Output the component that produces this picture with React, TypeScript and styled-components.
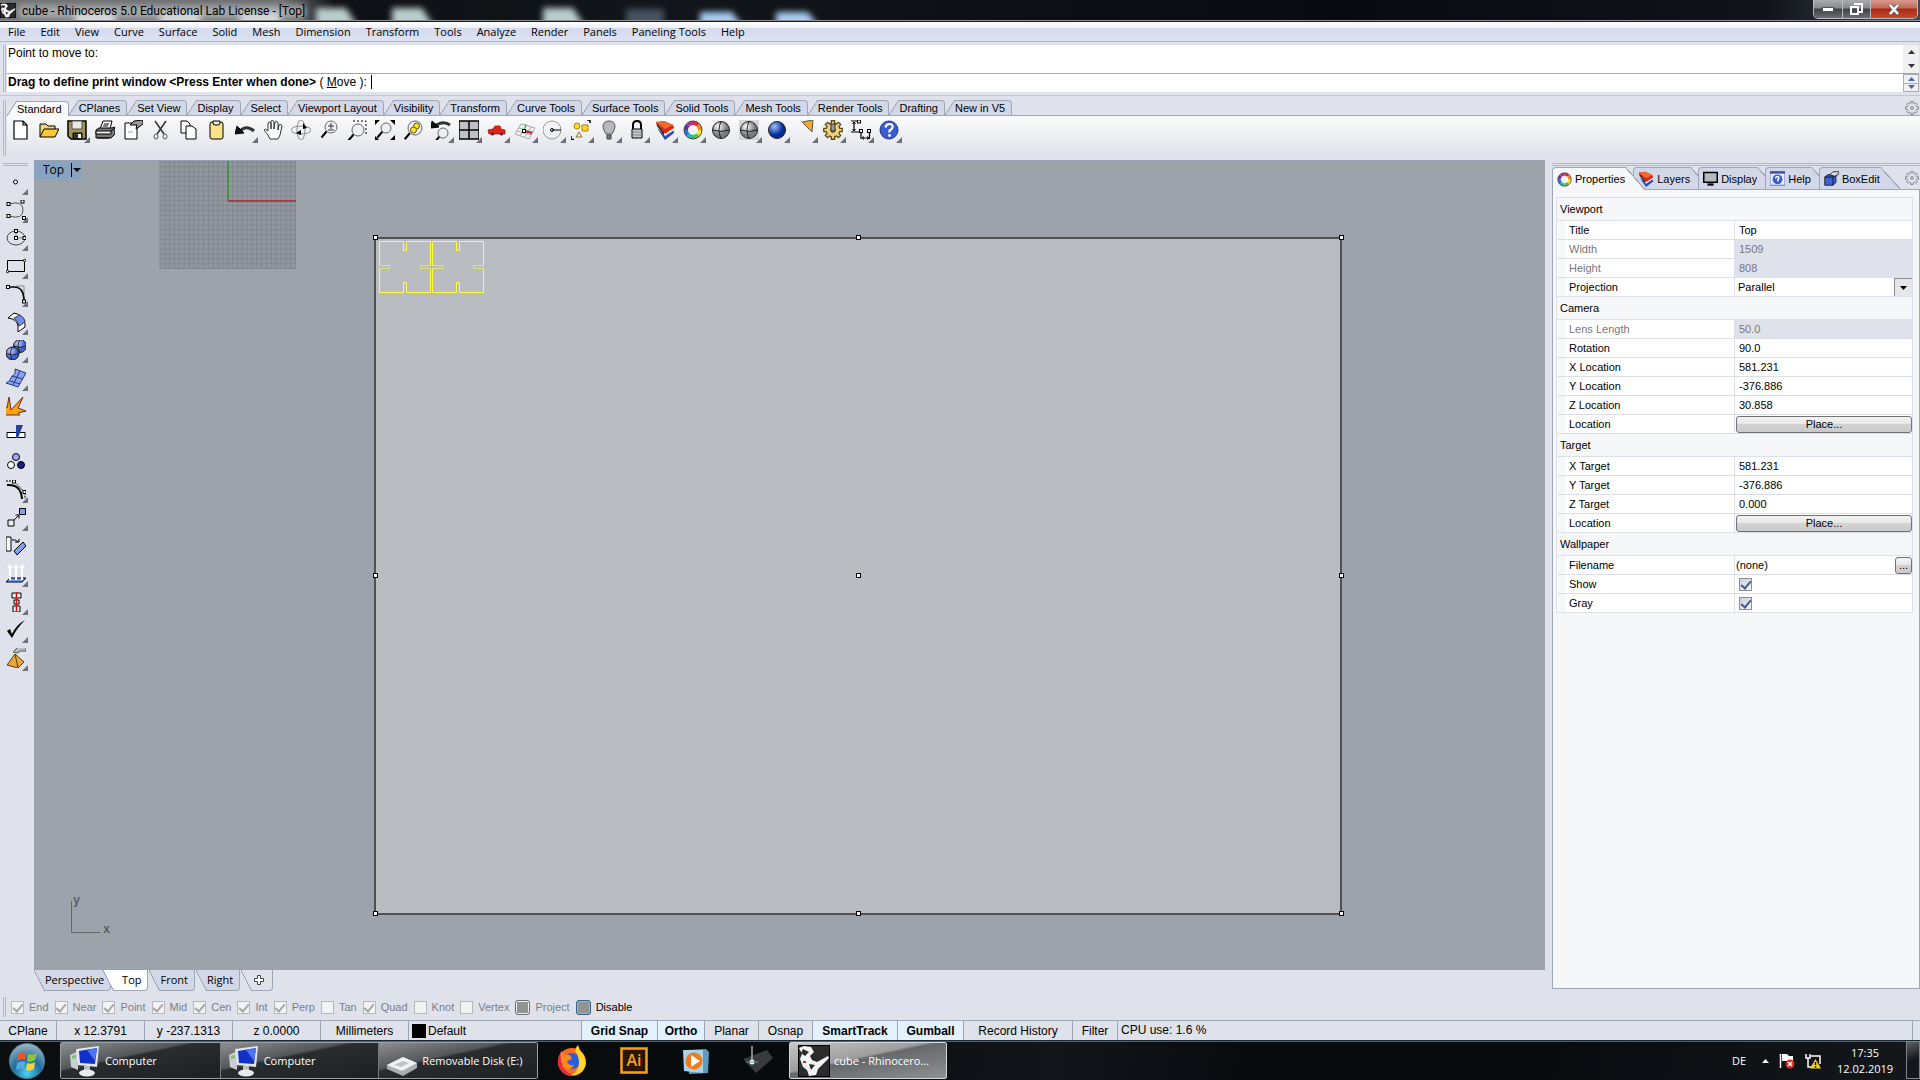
import React from 'react';
import styled, { createGlobalStyle, css } from 'styled-components';

const ui = '"Liberation Sans", Arial, sans-serif';
const shell = '"Open Sans", "Noto Sans", sans-serif';
const line = '#9fa6b4';
const face = '#dfe2ea';
const tabFace = '#d3d8e9';

const Global = createGlobalStyle`
  * { box-sizing: border-box; }
  body { margin: 0; background: ${face}; font-family: ${ui}; font-size: 11px; color: #000; }
  button, input, select { font: inherit; color: inherit; margin: 0; padding: 0; border: 0; background: none; }
  svg { display: block; }
`;

const Screen = styled.div`
  display: flex;
  flex-direction: column;
  height: 100vh;
  overflow: hidden;
`;

/* ---------- title bar ---------- */

const TitleBar = styled.header`
  position: relative;
  display: flex;
  align-items: flex-start;
  flex: 0 0 22px;
  background: linear-gradient(90deg, #0b0d10, #121519 35%, #070a0f 70%, #10141a 92%, #43484e);
  border-bottom: 1px solid #15181c;
  box-shadow: inset 0 -1px 0 #8d9095;
  overflow: hidden;
`;
const Smears = styled.svg`
  position: absolute;
  inset: 0;
`;
const TitleIcon = styled.span`
  position: relative;
  padding: 3px 0 0 0;
`;
const TitleText = styled.h1`
  position: relative;
  margin: 0;
  padding: 2px 0 0 6px;
  flex: 1;
  font: 400 12px/18px Roboto, ${shell};
`;
const WindowButtons = styled.div`
  position: relative;
  display: flex;
  height: 19px;
  margin-right: 2px;
  border: 1px solid #b9bcc0;
  border-top: 0;
  border-radius: 0 0 5px 5px;
  overflow: hidden;
`;
const WindowButton = styled.button<{ $wide?: boolean }>`
  width: ${p => (p.$wide ? 47 : 28)}px;
  display: grid;
  place-items: center;
  background: ${p =>
    p.$wide
      ? 'linear-gradient(#d99a8f, #c0675a 45%, #a82a14 50%, #c24a2e)'
      : 'linear-gradient(#a9abae, #85888c 45%, #3d4146 50%, #6b6f74)'};
  & + & { border-left: 1px solid #b9bcc0; }
`;

/* ---------- menus and command line ---------- */

const MenuBar = styled.nav`
  display: flex;
  flex: 0 0 20px;
  gap: 15px;
  padding: 0 8px;
  background: linear-gradient(#fff, #edf0f7 30%, #d4daec 34%, #dee3f3);
  border-bottom: 1px solid #b0b5c6;
`;
const MenuButton = styled.button`
  font: 400 11px/19px ${shell};
`;
const CommandArea = styled.section`
  display: flex;
  flex: 0 0 54px;
  padding: 3px 1px 3px 3px;
  border-bottom: 1px solid #c3c9d2;
`;
const Grip = styled.span<{ $flat?: boolean }>`
  flex: none;
  ${p =>
    p.$flat
      ? css`height: 3px; border-top: 1px solid #b3b8c8; border-bottom: 1px solid #b3b8c8;`
      : css`width: 3px; border-left: 1px solid #b3b8c8; border-right: 1px solid #b3b8c8;`}
`;
const CommandBox = styled.div`
  flex: 1;
  margin-left: 1px;
  background: #fff;
  font-size: 12px;
`;
const History = styled.div`
  display: flex;
  justify-content: space-between;
  height: 29px;
  padding-left: 1px;
  line-height: 16px;
  border-bottom: 1px solid ${line};
`;
const Prompt = styled.div`
  display: flex;
  justify-content: space-between;
  height: 18px;
  padding-left: 1px;
  line-height: 17px;
`;
const PromptText = styled.label`
  white-space: pre;
`;
const PromptInput = styled.input`
  flex: 1;
  margin-left: 4px;
  border-left: 1px solid #000;
  height: 14px;
  margin-top: 1px;
  outline: none;
`;
const ScrollPair = styled.div<{ $boxed?: boolean }>`
  display: flex;
  flex-direction: column;
  width: 16px;
  background: #f0f0f2;
  border: ${p => (p.$boxed ? '1px solid #a9adb8' : '0')};
  button { flex: 1; display: grid; place-items: center; }
  button + button { border-top: ${p => (p.$boxed ? '1px solid #a9adb8' : '0')}; }
`;

/* ---------- toolbar ---------- */

const ToolArea = styled.section`
  display: flex;
  flex: 0 0 64px;
  padding: 4px 0 4px 3px;
`;
const ToolMain = styled.div`
  flex: 1;
  display: flex;
  flex-direction: column;
  margin-left: 1px;
`;
const TabStrip = styled.div`
  display: flex;
  align-items: flex-end;
  height: 16px;
  border-bottom: 1px solid ${line};
`;
const ToolTab = styled.button<{ $on?: boolean }>`
  display: flex;
  height: 15px;
  margin-bottom: ${p => (p.$on ? -1 : 0)}px;
  line-height: 15px;
  white-space: nowrap;
  &::before {
    content: '';
    width: 10px;
    height: 100%;
    background: linear-gradient(to bottom right, transparent 46%, ${line} 47%, ${line} 52%, ${p => (p.$on ? '#fafbfc' : tabFace)} 53%);
  }
  span {
    height: 100%;
    padding-right: 6px;
    border: 1px solid ${line};
    border-width: 1px 1px 0 0;
    border-radius: 0 4px 0 0;
    background: ${p => (p.$on ? '#fafbfc' : tabFace)};
  }
`;
const StripSpace = styled.span`
  flex: 1;
`;
const IconButton = styled.button`
  display: grid;
  place-items: center;
  padding-right: 1px;
`;
const ToolRow = styled.div`
  display: flex;
  flex: 1;
  background: linear-gradient(#fafbfc, #f0f1f4 40%, ${face});
`;
const Tool = styled.button<{ $more?: boolean; $side?: boolean }>`
  position: relative;
  flex: none;
  display: grid;
  place-items: center;
  width: ${p => (p.$side ? 25 : 28)}px;
  height: 28px;
  ${p =>
    p.$more &&
    css`
      &::after {
        content: '';
        position: absolute;
        right: ${p.$side ? 0 : 1}px;
        bottom: 1px;
        border: 3px solid #6c7078;
        border-top-color: transparent;
        border-left-color: transparent;
      }
    `}
`;

/* ---------- workspace ---------- */

const Work = styled.main`
  display: flex;
  flex: 1;
  min-height: 0;
`;
const SideBar = styled.aside`
  display: flex;
  flex-direction: column;
  flex: 0 0 34px;
  padding: 3px 6px 0 3px;
`;
const SideTools = styled.div`
  display: flex;
  flex-direction: column;
  padding-top: 2px;
`;
const Center = styled.section`
  display: flex;
  flex-direction: column;
  flex: 1;
  min-width: 0;
`;
const Viewport = styled.div`
  position: relative;
  flex: 1;
  min-height: 0;
  overflow: hidden;
  background: #9da3ab;
  border: solid #9aa1b3;
  border-width: 1px 0;
`;
const Drawing = styled.svg`
  position: absolute;
  top: 0;
  left: 0;
`;
const Axes = styled.svg`
  position: absolute;
  left: 37px;
  bottom: 33px;
`;
const ViewLabel = styled.button`
  position: absolute;
  top: 0;
  left: 0;
  display: flex;
  align-items: center;
  height: 18px;
  width: 48px;
  padding-left: 9px;
  gap: 7px;
  background: #88a3c0;
  font: 400 12px/18px ${shell};
`;
const ViewTabs = styled.div`
  display: flex;
  height: 24px;
  align-items: flex-start;
`;
const ViewTab = styled.button<{ $on?: boolean; $first?: boolean; $plain?: boolean }>`
  position: relative;
  z-index: ${p => (p.$on ? 1 : 0)};
  display: flex;
  height: 21px;
  margin-left: ${p => (p.$on ? -8 : p.$first ? 0 : 1)}px;
  font: 400 11px/20px ${shell};
  &::before {
    content: '';
    width: 11px;
    height: 100%;
    background: linear-gradient(to top right, transparent 46%, ${line} 47%, ${line} 51%, ${p => (p.$on ? '#fff' : p.$plain ? face : tabFace)} 52%);
  }
  span {
    display: grid;
    place-items: center;
    height: 100%;
    padding: 0 6px 0 ${p => (p.$on ? 8 : 0)}px;
    border: 1px solid ${line};
    border-width: 0 1px 1px 0;
    border-radius: 0 0 4px 0;
    background: ${p => (p.$on ? '#fff' : p.$plain ? face : tabFace)};
  }
`;

/* ---------- properties panel ---------- */

const Panel = styled.aside`
  display: flex;
  flex-direction: column;
  flex: 0 0 375px;
  padding: 3px 0 0 7px;
`;
const PanelTabs = styled.div`
  display: flex;
  flex: none;
  height: 23px;
  padding-top: 1px;
`;
const PanelTab = styled.button<{ $on?: boolean }>`
  position: relative;
  z-index: ${p => (p.$on ? 1 : 0)};
  display: flex;
  flex: none;
  height: ${p => (p.$on ? 23 : 22)}px;
  margin-right: -12px;
  line-height: 20px;
  & > span {
    display: flex;
    align-items: center;
    gap: 3px;
    padding-left: 4px;
    border: 1px solid ${line};
    border-width: 1px 0 0 1px;
    border-radius: 4px 0 0 0;
    background: ${p => (p.$on ? '#f6f7f9' : tabFace)};
  }
  &::after {
    content: '';
    width: 20px;
    height: 100%;
    background: linear-gradient(to top right, ${p => (p.$on ? '#f6f7f9' : tabFace)} 48%, ${line} 49%, ${line} 52%, transparent 53%);
  }
`;
const PanelBody = styled.div`
  flex: 1;
  margin-bottom: 5px;
  padding: 7px 6px 0 3px;
  background: #f6f7f9;
  border: 1px solid ${line};
`;
const PropTable = styled.table`
  width: 100%;
  border-collapse: collapse;
  table-layout: fixed;
  line-height: 16px;
  background: #fff;
  td, th { border: 1px solid #dcdfe8; padding: 0; font-weight: 400; text-align: left; height: 19px; }
`;
const GroupCell = styled.th`
  && { height: 23px; padding-left: 3px; background: #f6f7f9; }
`;
const NameCell = styled.th<{ $dim?: boolean }>`
  width: 178px;
  && { border-right: 1px solid #dcdfe8; padding-left: 12px; }
  background: linear-gradient(90deg, #f6f7f9 8px, #fff 8px);
  color: ${p => (p.$dim ? '#777' : '#000')};
`;
const ValueCell = styled.td<{ $dim?: boolean; $flush?: boolean }>`
  background: ${p => (p.$dim ? face : '#fff')};
  color: ${p => (p.$dim ? '#777' : '#000')};
  && { padding-left: ${p => (p.$flush ? 1 : 4)}px; }
`;
const Field = styled.input`
  display: block;
  width: 100%;
  height: 16px;
`;
const Pair = styled.div`
  display: flex;
  align-items: center;
  justify-content: space-between;
  height: 18px;
`;
const Choice = styled.select`
  appearance: none;
  flex: 1;
  padding-left: 2px;
`;
const Arrow = styled.span`
  display: grid;
  place-items: center;
  width: 18px;
  height: 18px;
  border: 1px solid #8b8e94;
  border-width: 1px 0 0 1px;
  background: #e6e6e6;
`;
const Push = styled.button<{ $small?: boolean }>`
  display: block;
  width: ${p => (p.$small ? '17px' : '100%')};
  height: 17px;
  border: 1px solid #707276;
  border-radius: 3px;
  background: linear-gradient(#f3f3f3, #e6e6e6 49%, #d2d2d2 50%, #cbcbcb);
  line-height: 14px;
`;
const Tick = styled.input<{ $pale?: boolean; $block?: 'gray' | 'blue' }>`
  appearance: none;
  flex: none;
  display: grid;
  place-items: center;
  width: 13px;
  height: 13px;
  background: ${p => (p.$pale ? '#f3f3f4' : 'linear-gradient(135deg, #c9ced6, #f6f7f8)')};
  border: 1px solid ${p => (p.$pale ? '#b6b8bc' : '#8c8e92')};
  ${p =>
    !p.$block &&
    css`
      &:checked::after {
        content: '';
        width: 4px;
        height: 8px;
        margin-bottom: 2px;
        border: solid ${p.$pale ? '#a5a7ab' : '#43599c'};
        border-width: 0 2px 2px 0;
        transform: rotate(40deg);
      }
    `}
  ${p =>
    p.$block &&
    css`
      height: 15px;
      width: 15px;
      border-radius: 3px;
      border-color: ${p.$block === 'blue' ? '#2c628b' : '#6e7175'};
      background: #929292;
      box-shadow: inset 0 0 0 1px ${p.$block === 'blue' ? '#8dbbd9' : '#f0f0f0'};
    `}
`;

/* ---------- osnap and status ---------- */

const OsnapBar = styled.section`
  display: flex;
  align-items: center;
  flex: 0 0 26px;
  padding: 0 3px;
  line-height: 13px;
  ${Grip} { height: 20px; margin-right: 5px; }
`;
const Osnap = styled.label<{ $live?: boolean }>`
  display: flex;
  align-items: center;
  gap: 5px;
  margin-right: 6px;
  color: ${p => (p.$live ? '#000' : '#7c7e84')};
`;
const StatusBar = styled.footer`
  display: flex;
  flex: 0 0 20px;
  border-top: 1px solid ${line};
  font-size: 12px;
  padding-right: 7px;
`;
const Pane = styled.button<{ $w: number; $on?: boolean; $left?: boolean }>`
  display: flex;
  align-items: center;
  justify-content: ${p => (p.$left ? 'flex-start' : 'center')};
  gap: 2px;
  width: ${p => p.$w}px;
  padding-left: ${p => (p.$left ? 3 : 0)}px;
  border-right: 1px solid ${line};
  background: ${p => (p.$on ? '#e2f1fb' : 'transparent')};
  font-weight: ${p => (p.$on ? 700 : 400)};
  white-space: nowrap;
`;
const Usage = styled.output`
  flex: 1;
  padding-left: 3px;
  line-height: 19px;
  border-right: 1px solid ${line};
`;
const Swatch = styled.i`
  width: 14px;
  height: 14px;
  background: #000;
`;

/* ---------- taskbar ---------- */

const TaskBar = styled.nav`
  display: flex;
  align-items: stretch;
  flex: 0 0 40px;
  border-top: 1px solid #1c2832;
  box-shadow: inset 0 1px 0 #59626c;
  background: linear-gradient(100deg, #0b0f12, #070b0e 40%, #12161a 55%, #070b0e 65%, #070b0e 80%, #14181c);
  color: #fff;
  font: 400 11px/16px ${shell};
`;
const Orb = styled.button`
  width: 60px;
  padding-left: 8px;
`;
const TaskGroup = styled.div`
  display: flex;
  width: 478px;
  margin: 1px 3px 1px 0;
  border: 1px solid #9b9ea1;
  border-radius: 2px;
  overflow: hidden;
`;
const Task = styled.button<{ $active?: boolean }>`
  display: flex;
  align-items: center;
  gap: 4px;
  flex: 1;
  padding-left: 8px;
  text-align: left;
  white-space: nowrap;
  background: linear-gradient(168deg, #8d8f91, #54575a 38%, #2a2d30 42%, #1d2023);
  & + & { box-shadow: inset 1px 0 0 #777; }
  ${p =>
    p.$active &&
    css`
      flex: none;
      width: 158px;
      margin: 1px 0;
      border: 1px solid #d5d7d8;
      border-radius: 2px;
      background: linear-gradient(168deg, #c5c6c7, #9b9d9f 42%, #66696c 46%, #8e9092);
    `}
`;
const Launcher = styled.button`
  width: 62px;
  display: grid;
  place-items: center;
`;
const Tray = styled.div`
  display: flex;
  align-items: center;
  gap: 10px;
  margin-left: auto;
  padding-right: 7px;
  text-align: center;
`;
const Language = styled.span`
  margin-right: 6px;
`;
const Clock = styled.time`
  width: 68px;
`;
const ShowDesktop = styled.button`
  width: 14px;
  height: 38px;
  border: 1px solid #80858a;
  background: linear-gradient(160deg, #5b6065, #15181b 50%);
`;

/* ---------- icons ---------- */

const Ico = ({ children, s = 20 }: { children: React.ReactNode; s?: number }) => (
  <svg width={s} height={s} viewBox="0 0 20 20" fill="none" stroke="#000" aria-hidden="true">{children}</svg>
);
const Lens = ({ x = 12, y = 7, r = 6 }) => (
  <g>
    <circle cx={x} cy={y} r={r} fill="#eef0f3" stroke="#666" />
    <path d={`M${x - r * 0.75} ${y + r * 0.75}L${x - r * 0.75 - 5} ${y + r * 0.75 + 6}`} strokeWidth="2" />
  </g>
);
const Wheel = () => (
  <g strokeWidth="4" transform="translate(10 10)">
    {['#e22b2b', '#f08a1e', '#f2e42a', '#4fc232', '#25b6a8', '#2a6fd8', '#5c35b8', '#c12a8e'].map((c, i) => (
      <path key={c} stroke={c} d="M0 -7A7 7 0 0 1 4.95 -4.95" transform={`rotate(${i * 45})`} />
    ))}
    <circle r="9" stroke="#444" strokeWidth="1" />
  </g>
);
const LayersIcon = () => (
  <g stroke="none">
    <path d="M2 8L10 20L19 13L18 8L9 14Z" fill="#2b4bb5" />
    <path d="M2 5L10 16L19 10V7L9 13Z" fill="#fff" />
    <path d="M1 2L9 12V15L2 6Z" fill="#222" />
    <path d="M1 2L9 1L18 5L19 8L10 14Z" fill="#d9290f" />
    <path d="M1 2L9 1L18 5L10 9Z" fill="#f4692e" />
  </g>
);
const Ball = ({ a, b, x = 10, y = 10, r = 8, grid = true }: { a: string; b: string; x?: number; y?: number; r?: number; grid?: boolean }) => {
  const id = `ball${a.slice(1)}${b.slice(1)}`;
  return (
    <g>
      <radialGradient id={id} cx=".35" cy=".3"><stop offset="0" stopColor={a} /><stop offset="1" stopColor={b} /></radialGradient>
      <circle cx={x} cy={y} r={r} fill={`url(#${id})`} stroke="#222" />
      {grid && <path d={`M${x - r} ${y}Q${x} ${y + 3} ${x + r} ${y}M${x} ${y - r}Q${x - 4} ${y} ${x} ${y + r}`} stroke="#222" />}
    </g>
  );
};
const Dot = ({ x, y }: { x: number; y: number }) => <rect x={x - 1.5} y={y - 1.5} width="3" height="3" fill="#fff" />;

/* Eight teeth, four points each, on alternating radii. */
const gearPath = Array.from({ length: 8 }, (_, i) =>
  [[-14, 7], [-10, 9.4], [10, 9.4], [14, 7]].map(([deg, r]) => {
    const a = ((i * 45 + deg) * Math.PI) / 180;
    return `${(10 + r * Math.cos(a)).toFixed(2)} ${(10 + r * Math.sin(a)).toFixed(2)}`;
  }).join('L')
).join('L');
const Gear = ({ fill = 'none', stroke = '#7c7f85' }) => (
  <g fill={fill} stroke={stroke} strokeWidth="1.300">
    <path d={`M${gearPath}Z`} />
    <circle cx="10" cy="10" r="2" />
  </g>
);

const toolIcons: { name: string; more?: boolean; art: React.ReactNode }[] = [
  { name: 'New', art: <path d="M3 1h9l4 4v14H3zM12 1v4h4" fill="#fff" strokeWidth="1.200" /> },
  { name: 'Open', art: <><path d="M1 17V4h6l2 2h7v3" fill="#f6d56a" /><path d="M1 17L5 9H20L16 17Z" fill="#f9c93c" /></> },
  { name: 'Save', more: true, art: <><path d="M1 1h18v18H4l-3-3z" fill="#a09356" strokeWidth="1.500" /><path d="M5 1h10v8H5z" fill="#e8e8e4" stroke="#555" /><path d="M6 13h9v6H6z" fill="#333" /><path d="M11 14h3v4h-3z" fill="#fff" stroke="none" /></> },
  { name: 'Print', art: <><path d="M5 9L8 1H17L15 9" fill="#fff" /><path d="M1 10L4 8H17L20 7V14L16 18H1Z" fill="#777" /><path d="M1 11h15v3H1zM16 11l4-3" fill="#eee" /><path d="M3 18h11M9 4h5M8 6h5" /></> },
  { name: 'Export', art: <><path d="M2 3h12v16H2z" fill="#fff" /><path d="M7 5L11 1L20 0V4L16 7L13 9L14 5Z" fill="#999" /><path d="M5 12h5" stroke="#aaa" /></> },
  { name: 'Cut', art: <><path d="M4 1L13 14M15 1L6 14" stroke="#333" strokeWidth="1.500" /><ellipse cx="5" cy="16.500" rx="2" ry="2.500" stroke="#555" /><ellipse cx="14" cy="16.500" rx="2" ry="2.500" stroke="#555" /></> },
  { name: 'Copy', art: <><path d="M2 1h6l3 3v9H2z" fill="#fff" /><path d="M7 6h6l4 3v10H7z" fill="#fff" /></> },
  { name: 'Paste', art: <><rect x="3" y="2" width="13" height="17" rx="2" fill="#f8e386" /><path d="M6 1h7v3l-2 1H8L6 4z" fill="#e9e9e9" /></> },
  { name: 'Undo', more: true, art: <><path d="M4 12Q11 4 19 11" strokeWidth="3" stroke="#333" /><path d="M0 14L2 6L9 13Z" fill="#111" /></> },
  { name: 'Pan', art: <path d="M7 19L5 15L1 10Q2 8 5 11V3Q6 1 8 3V9V1Q10-1 11 2V9L12 2Q14 0 15 3V10L16 5Q18 3 19 6L17 15L15 19Z" fill="#fff" stroke="#333" /> },
  { name: 'Rotate view', art: <><ellipse cx="10" cy="10" rx="10" ry="4" stroke="#8a8c90" /><ellipse cx="10" cy="10" rx="4" ry="10" stroke="#8a8c90" /><path d="M5 13L10 15V10ZM12 9V3L16 8Z" fill="#000" stroke="none" /></> },
  { name: 'Zoom', art: <><Lens /><path d="M9 6h6M12 3v6M9 10h6" stroke="#333" /></> },
  { name: 'Zoom window', art: <><path d="M6 1H19V14" strokeDasharray="2 2" /><Lens x={11} y={10} /></> },
  { name: 'Zoom extents', art: <><Lens x={11} y={8} r={5} /><path d="M0 0h5L0 5zM20 0v5l-5-5zM20 20h-5l5-5zM0 20v-4l4 4z" fill="#000" stroke="none" /></> },
  { name: 'Zoom selected', art: <><Lens x={12} y={8} r={7} /><circle cx="13.500" cy="6" r="3" fill="#f7e22a" stroke="#6a5a10" /><circle cx="10.500" cy="10" r="3" fill="#f7e22a" stroke="#6a5a10" /></> },
  { name: 'Undo view', more: true, art: <><Lens x={12} y={13} r={5} /><path d="M4 6Q12 0 19 5" strokeWidth="3" stroke="#333" /><path d="M0 8L1 1L8 7Z" fill="#111" /></> },
  { name: 'Four views', more: true, art: <path d="M0 1h20v18H0zM10 1v18M0 10h20" fill="#bfc1c4" strokeWidth="1.500" /> },
  { name: 'Named views', more: true, art: <><path d="M2 14L1 10L6 9L8 6H13L14 9L18 10V14Z" fill="#e0231b" stroke="#a11" strokeWidth=".800" /><circle cx="5.500" cy="14" r="1.600" fill="#333" stroke="none" /><circle cx="14.500" cy="14" r="1.600" fill="#333" stroke="none" /></> },
  { name: 'CPlane', more: true, art: <><path d="M0 14L6 4L20 8L14 19ZM2 11L16 15M4 8L18 12M5 16L11 6M10 17L16 7" stroke="#a7a9ae" /><path d="M9 11L17 13" stroke="#b22" strokeWidth="2" /><path d="M9 11L11 4" stroke="#2a2" /><Dot x={9} y={11} /></> },
  { name: 'Object snap', more: true, art: <><circle cx="9" cy="10" r="9" stroke="#999" /><path d="M9 10H18" /><circle cx="9" cy="10" r="1.500" /></> },
  { name: 'Select', more: true, art: <><circle cx="6" cy="6" r="3" fill="#f7d92a" stroke="#a80" /><path d="M11 5h6v6h-6z" fill="#f7d92a" stroke="#a80" /><path d="M8 12L11 17H5Z" stroke="#963" /><path d="M16 0h3v3M0 16v3.500h3" strokeWidth="1.500" /></> },
  { name: 'Hide', more: true, art: <><path d="M10 1Q16 1 16 7Q15 11 13 14H7Q5 11 4 7Q4 1 10 1Z" fill="#b5b8bc" stroke="#555" /><path d="M8 15h4v4H8z" fill="#777" stroke="#444" /></> },
  { name: 'Lock', more: true, art: <><path d="M6 9V5Q6 1 10 1T14 5V9" strokeWidth="2" /><path d="M5 9h10v9H5z" fill="#c5c7ca" /><path d="M6 12h8M6 15h8" stroke="#888" /></> },
  { name: 'Layers', more: true, art: <LayersIcon /> },
  { name: 'Properties', more: true, art: <Wheel /> },
  { name: 'Shade', art: <Ball a="#ffffff" b="#77797d" r={8.5} /> },
  { name: 'Ghosted', more: true, art: <><path d="M0 0h20v20H0z" stroke="none" fill="#d4d5d8" /><Ball a="#ffffff" b="#77797d" r={8.5} /></> },
  { name: 'Render', more: true, art: <Ball a="#9cc4ff" b="#062a9a" r={8.5} grid={false} /> },
  { name: 'Spotlight', more: true, art: <path d="M7 2L18 0L17 12Z" fill="#f7a823" stroke="#555" /> },
  { name: 'Options', more: true, art: <><Gear fill="#f0cf78" stroke="#5a4a18" /><path d="M8 4h4v7H8z" fill="#999" stroke="#333" /></> },
  { name: 'Dimension', more: true, art: <><path d="M0 1h9M0 12h8M3 2V11M10 12V19M18.500 12V19M11 18H18" strokeWidth="1.200" /><path d="M1.500 4L3 2L4.500 4M1.500 9L3 11L4.500 9M13 16.500L11 18L13 19.500M16 16.500L18 18L16 19.500" /><Dot x={8} y={1.500} /><Dot x={10} y={11} /><Dot x={18} y={11} /></> },
  { name: 'Help', more: true, art: <><circle cx="10" cy="10" r="9" fill="#3a5bd0" stroke="#22388f" /><path d="M6.500 7.500Q7 4 10.500 4T13.500 7.500Q13 9.500 10.500 10.500V12.500" stroke="#fff" strokeWidth="2.200" /><circle cx="10.500" cy="15.500" r="1.400" fill="#fff" stroke="none" /></> },
];

const sideIcons: { name: string; more?: boolean; art: React.ReactNode }[] = [
  { name: 'Point', more: true, art: <circle cx="9.500" cy="10" r="2" fill="#fff" /> },
  { name: 'Curve', more: true, art: <><path d="M3 4Q17 0 17 10T3 16" stroke="#555" /><Dot x={2.500} y={4} /><Dot x={16.500} y={1.500} /><Dot x={2.500} y={16} /><Dot x={18} y={18} /></> },
  { name: 'Ellipse', more: true, art: <><ellipse cx="10" cy="10" rx="9" ry="7" stroke="#444" /><path d="M10 3V10H19" stroke="#777" /><Dot x={10} y={3} /><Dot x={10} y={10} /><Dot x={18.500} y={10} /></> },
  { name: 'Rectangle', more: true, art: <><path d="M1.500 4.500h17v11h-17z" /><circle cx="18.500" cy="4.500" r="1.200" fill="#fff" /><circle cx="1.500" cy="15.500" r="1.200" fill="#fff" /></> },
  { name: 'Fillet', more: true, art: <><path d="M10 2H18V10" stroke="#888" /><path d="M2 3H8Q18 3 18 17" strokeWidth="1.700" /><Dot x={2} y={3} /><Dot x={18} y={17.500} /></> },
  { name: 'Surface', more: true, art: <><path d="M2 6L8 1Q18 3 19 12V15L12 20V14Q11 7 2 6Z" fill="#fff" /><path d="M8 6L14 3Q19 6 19 10L13 14Q12 9 8 6Z" fill="#6f8eed" stroke="#334" /></> },
  { name: 'Solid', more: true, art: <><Ball a="#c6d4ff" b="#3d5fd4" x={14} y={6} r={6.5} /><Ball a="#c6d4ff" b="#3d5fd4" x={6.5} y={13.5} r={6.5} /></> },
  { name: 'Mesh', more: true, art: <path d="M9 1L20 5L12 19L0 15Q4 14 6 8Q10 7 9 1ZM6 8L17 11M4 13L14 16M14 3L7 17" fill="#8aa4f2" stroke="#223a80" /> },
  { name: 'Explode', art: <path d="M-2 19V10L1 12L3 1L5 14L17 1L12 12L20 15L12 17L14 19Z" fill="#ff9f0a" stroke="#632" /> },
  { name: 'Trim', art: <><path d="M1 8.500h18v5H1z" fill="#fff" /><path d="M10 1H17L12 14H10Z" fill="#24409a" stroke="none" /></> },
  { name: 'Group', art: <><circle cx="10" cy="5" r="3.500" fill="#a3a8f6" /><circle cx="5" cy="13" r="3.500" fill="#fff" /><circle cx="15" cy="13" r="3.500" fill="#1d1d8c" /></> },
  { name: 'Control points', more: true, art: <><path d="M1 5Q15 4 16 19" strokeWidth="2" /><path d="M0 1H8L19 13V19" strokeDasharray="2 1" /><Dot x={8} y={1.500} /><Dot x={18.500} y={12} /></> },
  { name: 'Move', more: true, art: <><path d="M2 12h6v6H2z" fill="#eee" /><path d="M13.500 .500h6v6h-6z" fill="#7f9ff5" /><path d="M8 12L13 7M9.500 7H13V10.500" /></> },
  { name: 'Rotate', art: <><path d="M0 1h5v14H0z" fill="#fff" /><path d="M8 15L17 6L20 10L11 19Z" fill="#7f9ff5" /><path d="M6 4Q10 3 12 6M9 6h4V3" /></> },
  { name: 'Extrude', more: true, art: <><path d="M0 18L4 14H20L16 18Z" fill="#7f9ff5" /><path d="M4 16V3M10 16V3M16 16V3" stroke="#fff" strokeWidth="2" /><path d="M4 0L7 4H1ZM10 0L13 4H7ZM16 0L19 4H13Z" fill="#fff" stroke="none" /></> },
  { name: 'Align', more: true, art: <><path d="M6 1h9v5H6zM8 8h5v4H8zM7 14h7v6H7z" fill="#eee" /><path d="M10.500 0V20" stroke="#c31818" strokeWidth="1.500" /></> },
  { name: 'Check', more: true, art: <path d="M1 11L4 9L6 14Q10 5 19 0Q11 8 6 18Z" fill="#000" stroke="none" /> },
  { name: 'Pyramid', more: true, art: <><path d="M9 6L18 14L12 20L1 17Z" fill="#e9a63a" stroke="#5a3d10" /><path d="M9 6L12 20" stroke="#5a3d10" /><path d="M7 4L12-1H20V3H14L12 5Z" fill="#bbb" stroke="#555" /></> },
];

const RhinoMark = ({ w, h }: { w: number; h: number }) => (
  <svg width={w} height={h} viewBox="0 0 32 32" preserveAspectRatio="none" aria-hidden="true">
    <path d="M0 0h32v32H0z" fill="#2b2b2d" stroke="#000" strokeWidth="2" />
    <path d="M1 3L6 1L13 2L16 7L12 11L14 15L19 17L30 11L31 13L24 20L20 24L18 30L11 31L9 25L5 22L2 14L4 9Z" fill="#f4f4f4" />
    <path d="M5 4L11 7L7 11L3 8ZM11 19L17 20L13 25Z" fill="#2b2b2d" />
    <path d="M5 17h3" stroke="#d22" strokeWidth="2" />
  </svg>
);
const ComputerMark = () => (
  <svg width="32" height="32" viewBox="0 0 32 32" aria-hidden="true">
    <path d="M1 10L9 6V25L2 22Z" fill="#c9cdd2" />
    <path d="M3 11L7 10V13L3 14Z" fill="#7ec06b" />
    <path d="M7 4L30 1L28 22L9 20Z" fill="#e3e7ec" />
    <path d="M10 6L28 3L26 19L11 18Z" fill="#1230c8" />
    <path d="M18 5L28 3L26 16Z" fill="#4c74ef" />
    <path d="M15 21h6v5h-6z" fill="#b9bec4" />
    <ellipse cx="18" cy="28" rx="8" ry="3.500" fill="#e8eaec" />
  </svg>
);
const DiskMark = () => (
  <svg width="32" height="32" viewBox="0 0 32 32" aria-hidden="true">
    <path d="M1 20L17 12L31 18V23L17 31L1 24Z" fill="#a9adb1" />
    <path d="M1 20L17 12L31 18L16 26Z" fill="#eef0f1" />
    <path d="M8 20L17 16L23 18L15 22Z" fill="#bfc3c6" />
  </svg>
);

const menus = ['File', 'Edit', 'View', 'Curve', 'Surface', 'Solid', 'Mesh', 'Dimension', 'Transform', 'Tools', 'Analyze', 'Render', 'Panels', 'Paneling Tools', 'Help'];
const toolTabs = ['Standard', 'CPlanes', 'Set View', 'Display', 'Select', 'Viewport Layout', 'Visibility', 'Transform', 'Curve Tools', 'Surface Tools', 'Solid Tools', 'Mesh Tools', 'Render Tools', 'Drafting', 'New in V5'];
const osnaps: [string, boolean][] = [['End', true], ['Near', true], ['Point', true], ['Mid', true], ['Cen', true], ['Int', true], ['Perp', true], ['Tan', false], ['Quad', true], ['Knot', false], ['Vertex', false]];

type Kind = 'text' | 'off' | 'select' | 'button' | 'file' | 'tick';
const groups: { title: string; rows: [string, string, Kind][] }[] = [
  { title: 'Viewport', rows: [['Title', 'Top', 'text'], ['Width', '1509', 'off'], ['Height', '808', 'off'], ['Projection', 'Parallel', 'select']] },
  { title: 'Camera', rows: [['Lens Length', '50.0', 'off'], ['Rotation', '90.0', 'text'], ['X Location', '581.231', 'text'], ['Y Location', '-376.886', 'text'], ['Z Location', '30.858', 'text'], ['Location', 'Place...', 'button']] },
  { title: 'Target', rows: [['X Target', '581.231', 'text'], ['Y Target', '-376.886', 'text'], ['Z Target', '0.000', 'text'], ['Location', 'Place...', 'button']] },
  { title: 'Wallpaper', rows: [['Filename', '(none)', 'file'], ['Show', '', 'tick'], ['Gray', '', 'tick']] },
];

const Down = ({ color = '#000', up = false }) => (
  <svg width="7" height="4" viewBox="0 0 7 4" aria-hidden="true"><path d={up ? 'M0 4L3.500 0L7 4Z' : 'M0 0H7L3.500 4Z'} fill={color} /></svg>
);

function PropRow({ id, name, value, kind }: { id: string; name: string; value: string; kind: Kind }) {
  const dim = kind === 'off';
  return (
    <tr>
      <NameCell scope="row" $dim={dim}><label htmlFor={id}>{name}</label></NameCell>
      <ValueCell $dim={dim} $flush={kind === 'select' || kind === 'button' || kind === 'file'}>
        {(kind === 'text' || dim) && <Field id={id} defaultValue={value} disabled={dim} />}
        {kind === 'select' && (
          <Pair><Choice id={id}><option>{value}</option></Choice><Arrow><Down /></Arrow></Pair>
        )}
        {kind === 'button' && <Push id={id}>{value}</Push>}
        {kind === 'file' && <Pair>{value}<Push id={id} $small>...</Push></Pair>}
        {kind === 'tick' && <Tick id={id} type="checkbox" defaultChecked />}
      </ValueCell>
    </tr>
  );
}

/* One notched square of the flat cube pattern. */
const Notched = ({ x }: { x: number }) => (
  <g transform={`translate(${x} 80.500)`} stroke="#ffff3c" fill="none">
    <path d="M0 24V0H24V9H27V0H51V24M51 27V51H27V41H24V51H0V27" />
    <path d="M0 24H10V27H0M51 24H41V27H51" stroke="#e3e46a" />
  </g>
);

function Model() {
  const cells = Array.from({ length: 29 }, (_, i) => 126 + i * 4.84);
  const rows = Array.from({ length: 23 }, (_, i) => 107.5 - i * 4.84).filter(y => y > 0);
  return (
    <Drawing width="1511" height="809" viewBox="0 0 1511 809" aria-label="Top view of the cube model">
      <path d="M126 0H262V108H126Z" fill="#92979f" />
      <path d={cells.map(x => `M${x} 0V108`).join('') + rows.map(y => `M126 ${y}H262`).join('')} stroke="#838890" />
      <path d="M194 0V40" stroke="#449344" strokeWidth="2" />
      <path d="M194 40H262" stroke="#9b4444" strokeWidth="2" />
      <path d="M341 77H1307V753H341Z" fill="#b9bdc2" stroke="#4e5052" strokeWidth="2" />
      <Notched x={345.5} />
      <Notched x={398.5} />
      {[341.5, 824.5, 1307.5].map(x =>
        [76.5, 414.5, 752.5].map(y => (
          <rect key={`${x}-${y}`} x={x - 2} y={y - 2} width="4" height="4" fill="#fff" stroke="#000" />
        ))
      )}
    </Drawing>
  );
}

export default function App() {
  return (
    <Screen>
      <Global />
      <TitleBar>
        <Smears width="1920" height="20" aria-hidden="true">
          <defs>
            <filter id="soft" x="-20%" width="140%" y="-50%" height="200%"><feGaussianBlur stdDeviation="3" /></filter>
            <linearGradient id="glow"><stop offset="0" stopColor="#6e7072" /><stop offset=".85" stopColor="#6a6c6d" /><stop offset="1" stopColor="#6a6c6d" stopOpacity="0" /></linearGradient>
          </defs>
          <path d="M0 0H335V21H0Z" fill="url(#glow)" />
          <g filter="url(#soft)">
            <path d="M18 5H306V19H18Z" fill="#a4a6a7" />
            <path d="M75 13h40v14H75zM160 13h40v14h-40zM240 13h40v14h-40z" fill="#d5d9d8" />
            <path d="M316 8H346L360 30H316ZM392 8H422L436 30H392ZM543 8H573L587 30H543Z" fill="#b9cecb" />
            <path d="M626 9h38v20h-38z" fill="#45515e" />
            <path d="M700 12H732L745 30H700ZM776 12H808L821 30H776Z" fill="#a9cdf5" />
          </g>
        </Smears>
        <TitleIcon><RhinoMark w={16} h={15} /></TitleIcon>
        <TitleText>cube - Rhinoceros 5.0 Educational Lab License - [Top]</TitleText>
        <WindowButtons>
          <WindowButton aria-label="Minimize"><svg width="12" height="5"><path d="M.5 .5h11v4h-11z" fill="#fff" stroke="#555" /></svg></WindowButton>
          <WindowButton aria-label="Restore"><svg width="13" height="13"><path d="M4 1h8v8h-3M1 4h7v7H1z" fill="none" stroke="#fff" strokeWidth="2" /></svg></WindowButton>
          <WindowButton $wide aria-label="Close"><svg width="12" height="11"><path d="M2 1L10 10M10 1L2 10" stroke="#566" strokeWidth="4" /><path d="M2 1L10 10M10 1L2 10" stroke="#fff" strokeWidth="2.500" /></svg></WindowButton>
        </WindowButtons>
      </TitleBar>

      <MenuBar>{menus.map(m => <MenuButton key={m}>{m}</MenuButton>)}</MenuBar>

      <CommandArea>
        <Grip />
        <CommandBox>
          <History>
            Point to move to:
            <ScrollPair><button aria-label="Scroll up"><Down up color="#333" /></button><button aria-label="Scroll down"><Down color="#333" /></button></ScrollPair>
          </History>
          <Prompt>
            <PromptText htmlFor="command"><b>{'Drag to define print window <Press Enter when done>'}</b>{' ( '}<u>M</u>{'ove ):'}</PromptText>
            <PromptInput id="command" />
            <ScrollPair $boxed><button aria-label="Previous"><Down up color="#4a66b0" /></button><button aria-label="Next"><Down color="#4a66b0" /></button></ScrollPair>
          </Prompt>
        </CommandBox>
      </CommandArea>

      <ToolArea>
        <Grip />
        <ToolMain>
          <TabStrip>
            {toolTabs.map((t, i) => <ToolTab key={t} $on={i === 0}><span>{t}</span></ToolTab>)}
            <StripSpace />
            <IconButton aria-label="Toolbar options"><Ico s={14}><Gear /></Ico></IconButton>
          </TabStrip>
          <ToolRow>
            {toolIcons.map(t => <Tool key={t.name} $more={t.more} aria-label={t.name}><Ico>{t.art}</Ico></Tool>)}
          </ToolRow>
        </ToolMain>
      </ToolArea>

      <Work>
        <SideBar>
          <Grip $flat />
          <SideTools>
            {sideIcons.map(t => <Tool key={t.name} $side $more={t.more} aria-label={t.name}><Ico>{t.art}</Ico></Tool>)}
          </SideTools>
        </SideBar>
        <Center>
          <Viewport>
            <Model />
            <ViewLabel>Top<svg width="11" height="14"><path d="M.5 0V14" stroke="#000" /><path d="M2 5H10L6 9Z" /></svg></ViewLabel>
            <Axes width="42" height="42" aria-hidden="true">
              <path d="M.5 7V38.500H29" stroke="#64676c" fill="none" />
              <text x="2" y="10" fontSize="12" fontWeight="700" fontFamily="Liberation Mono, monospace" fill="#5c5f64">y</text>
              <text x="32" y="39" fontSize="12" fontWeight="700" fontFamily="Liberation Mono, monospace" fill="#5c5f64">x</text>
            </Axes>
          </Viewport>
          <ViewTabs>
            <ViewTab $first><span>Perspective</span></ViewTab>
            <ViewTab $on><span>Top</span></ViewTab>
            <ViewTab><span>Front</span></ViewTab>
            <ViewTab><span>Right</span></ViewTab>
            <ViewTab $plain aria-label="New viewport"><span><svg width="14" height="10" viewBox="0 0 14 10"><path d="M5.500 .5h3v3h3v3h-3v3h-3v-3h-3v-3h3z" fill="#fff" stroke="#444" /></svg></span></ViewTab>
          </ViewTabs>
        </Center>
        <Panel>
          <Grip $flat />
          <PanelTabs>
            <PanelTab $on><span><Ico s={15}><Wheel /></Ico>Properties</span></PanelTab>
            <PanelTab><span><Ico s={16}><LayersIcon /></Ico>Layers</span></PanelTab>
            <PanelTab><span><Ico s={15}><path d="M1 2h18v13H1z" fill="#b6b9bd" strokeWidth="2" /><path d="M6 18h8" strokeWidth="3" /></Ico>Display</span></PanelTab>
            <PanelTab><span><Ico s={15}><path d="M0 1h20v18H0z" fill="#e6eafb" stroke="#3a4fb0" /><path d="M0 2h20" stroke="#3a4fb0" strokeWidth="3" /><circle cx="10" cy="11" r="6.500" fill="#3a5bd0" stroke="none" /><path d="M7.500 10Q8 7 10.500 7.500T10.500 12V14" stroke="#fff" strokeWidth="2" /></Ico>Help</span></PanelTab>
            <PanelTab><span><Ico s={15}><path d="M1 8L5 5H16V15L12 19H1Z" fill="#3f63d6" /><path d="M1 8H12V19M12 8L16 5" /><path d="M8 5L12 1H20V4L14 7Z" fill="#ddd" /></Ico>BoxEdit</span></PanelTab>
            <StripSpace />
            <IconButton aria-label="Panel options"><Ico s={14}><Gear /></Ico></IconButton>
          </PanelTabs>
          <PanelBody>
            <PropTable>
              <colgroup><col width="178" /><col /></colgroup>
              {groups.map(g => (
                <tbody key={g.title}>
                  <tr><GroupCell colSpan={2} scope="rowgroup">{g.title}</GroupCell></tr>
                  {g.rows.map(([name, value, kind]) => (
                    <PropRow key={name} id={`${g.title}-${name}`} name={name} value={value} kind={kind} />
                  ))}
                </tbody>
              ))}
            </PropTable>
          </PanelBody>
        </Panel>
      </Work>

      <OsnapBar>
        <Grip />
        {osnaps.map(([name, on]) => (
          <Osnap key={name}><Tick type="checkbox" $pale defaultChecked={on} />{name}</Osnap>
        ))}
        <Osnap><Tick type="checkbox" $block="gray" />Project</Osnap>
        <Osnap $live><Tick type="checkbox" $block="blue" />Disable</Osnap>
      </OsnapBar>

      <StatusBar>
        <Pane $w={57}>CPlane</Pane>
        <Pane $w={88}>x 12.3791</Pane>
        <Pane $w={88}>y -237.1313</Pane>
        <Pane $w={88}>z 0.0000</Pane>
        <Pane $w={88}>Millimeters</Pane>
        <Pane $w={173} $left><Swatch />Default</Pane>
        <Pane $w={76} $on>Grid Snap</Pane>
        <Pane $w={47} $on>Ortho</Pane>
        <Pane $w={54}>Planar</Pane>
        <Pane $w={54}>Osnap</Pane>
        <Pane $w={85} $on>SmartTrack</Pane>
        <Pane $w={66} $on>Gumball</Pane>
        <Pane $w={109}>Record History</Pane>
        <Pane $w={45}>Filter</Pane>
        <Usage>CPU use: 1.6 %</Usage>
      </StatusBar>

      <TaskBar>
        <Orb aria-label="Start">
          <svg width="38" height="38" viewBox="0 0 38 38">
            <defs><radialGradient id="orb" cx=".5" cy=".85" r=".8"><stop offset="0" stopColor="#49d3f2" /><stop offset=".5" stopColor="#1c6c9f" /><stop offset="1" stopColor="#8fb0c2" /></radialGradient></defs>
            <circle cx="19" cy="19" r="17.500" fill="url(#orb)" stroke="#567c92" />
            <path d="M10 12Q14 9 18 11L17 18Q13 16 9 19Z" fill="#e8562a" />
            <path d="M20 12Q24 14 29 11L27 18Q23 21 19 19Z" fill="#8cc63f" />
            <path d="M9 21Q13 18 17 20L16 27Q12 25 8 28Z" fill="#5aa9e6" />
            <path d="M19 21Q23 23 27 20L26 27Q22 30 18 28Z" fill="#fbd03b" />
          </svg>
        </Orb>
        <TaskGroup>
          <Task><ComputerMark />Computer</Task>
          <Task><ComputerMark />Computer</Task>
          <Task><DiskMark />Removable Disk (E:)</Task>
        </TaskGroup>
        <Launcher aria-label="Firefox">
          <svg width="30" height="32" viewBox="0 0 30 32">
            <circle cx="15" cy="17" r="14" fill="#ff6a1f" />
            <path d="M1 17A14 14 0 0 0 20 30Q10 30 5 21L4 7Q1 11 1 17Z" fill="#e8283f" />
            <circle cx="15" cy="16" r="8" fill="#2a5fd6" />
            <path d="M18 6Q19 2 21 0Q22 5 26 9Q31 17 27 24Q22 31 14 30Q22 26 22 18Q22 11 18 6Z" fill="#ffd52e" />
            <path d="M4 6L8 10L13 10L15 14L10 16Q11 21 17 20Q14 26 8 23Q2 17 4 6Z" fill="#ff8a1c" />
          </svg>
        </Launcher>
        <Launcher aria-label="Illustrator">
          <svg width="28" height="27" viewBox="0 0 28 27">
            <path d="M1.500 1.500h25v24h-25z" fill="#2b1500" stroke="#f9a01b" strokeWidth="2.500" />
            <text x="14" y="19" textAnchor="middle" fontSize="16" fontWeight="600" fontFamily="Open Sans, sans-serif" fill="#f9a01b">Ai</text>
          </svg>
        </Launcher>
        <Launcher aria-label="Media Player">
          <svg width="28" height="28" viewBox="0 0 28 28">
            <path d="M5 3L24 2L27 5L26 26L7 27Z" fill="#5d9cc0" />
            <path d="M1 3H21V26L2 24Z" fill="#a8d4ea" />
            <circle cx="12" cy="14" r="8.500" fill="#f27a1a" />
            <path d="M9 8L18 14L9 20Z" fill="#fff" />
          </svg>
        </Launcher>
        <Launcher aria-label="Laser cutter">
          <svg width="32" height="30" viewBox="0 0 32 30">
            <path d="M1 13L25 4L31 12L14 27Z" fill="#393b3d" />
            <path d="M10 0V16" stroke="#aaa" strokeWidth="1.500" />
            <circle cx="10" cy="16" r="2.500" fill="#dff" />
            <path d="M4 16h12" stroke="#788" />
          </svg>
        </Launcher>
        <Task $active><RhinoMark w={32} h={32} />cube - Rhinocero...</Task>
        <Tray>
          <Language>DE</Language>
          <Down up color="#fff" />
          <svg width="16" height="16" viewBox="0 0 16 16" aria-hidden="true">
            <path d="M1.500 1V15" stroke="#fff" strokeWidth="1.500" /><path d="M3 1H8L10 3H14V8H3Z" fill="#fff" />
            <circle cx="11" cy="11" r="4.500" fill="#d9291c" /><path d="M9 9L13 13M13 9L9 13" stroke="#fff" strokeWidth="1.500" />
          </svg>
          <svg width="16" height="16" viewBox="0 0 16 16" aria-hidden="true">
            <path d="M1 1v4h4V1M3 5v9h4M6 3h9v8" fill="none" stroke="#fff" strokeWidth="1.500" />
            <path d="M10.500 6L16 15.500H5Z" fill="#f6cf23" /><path d="M10.500 9V12M10.500 13v1.500" stroke="#000" strokeWidth="1.500" />
          </svg>
          <Clock>17:35<br />12.02.2019</Clock>
        </Tray>
        <ShowDesktop aria-label="Show desktop" />
      </TaskBar>
    </Screen>
  );
}
